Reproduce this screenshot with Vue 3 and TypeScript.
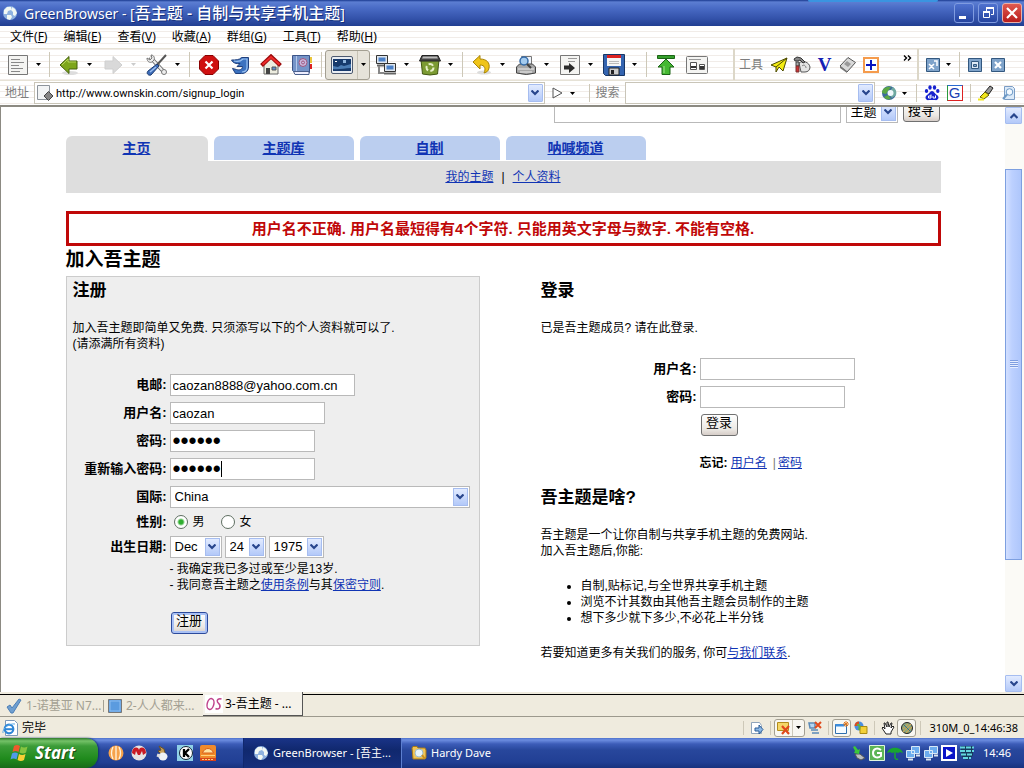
<script setup lang="ts">
import { ref } from 'vue'

interface Menu { name: string; key: string }

const menus: Menu[] = [
  { name: '文件', key: 'F' },
  { name: '编辑', key: 'E' },
  { name: '查看', key: 'V' },
  { name: '收藏', key: 'A' },
  { name: '群组', key: 'G' },
  { name: '工具', key: 'T' },
  { name: '帮助', key: 'H' },
]
const siteTabs: string[] = ['主页', '主题库', '自制', '呐喊频道']
const benefits: string[] = [
  '自制,贴标记,与全世界共享手机主题',
  '浏览不计其数由其他吾主题会员制作的主题',
  '想下多少就下多少,不必花上半分钱',
]

const address = ref('http://www.ownskin.com/signup_login')
const email = ref('caozan8888@yahoo.com.cn')
const username = ref('caozan')
const password = ref('caozan')
const repeated = ref('caozan')
const gender = ref('m')
</script>

<template>
  <div class="desktop">
    <header class="titlebar">
      <svg class="app-icon" width="16" height="16" viewBox="0 0 16 16"><circle cx="8" cy="8" r="7" fill="#8fb2e0" /><path d="M2 5l3-3 4 0 0 3-3 1-1 3-3 0zM10 2l3 2 2 4-2 3-2-1 0-3-2-2zM5 10l4 0 1 2-2 3-3-1z" fill="#f2f8f4" /></svg>
      <h1>GreenBrowser - [<span>吾主题 - 自制与共享手机主题</span>]</h1>
      <div class="pill"></div>
      <div class="winbtns">
        <button aria-label="最小化"><svg width="18" height="18" viewBox="0 0 18 18"><path d="M4 12h7v3h-7z" fill="#fff" /></svg></button>
        <button aria-label="还原"><svg width="18" height="18" viewBox="0 0 18 18" fill="none" stroke="#fff"><path d="M7.500 7V4.500h7v6H12" /><path d="M7 4h8" stroke-width="2" /><path d="M4.500 8v5.500h6V8.500" /><path d="M4 8h7" stroke-width="2" /></svg></button>
        <button class="close" aria-label="关闭"><svg width="18" height="18" viewBox="0 0 18 18"><path d="M4 4l10 10M14 4L4 14" stroke="#fff" stroke-width="2.200" /></svg></button>
      </div>
    </header>

    <div class="chrome">
      <nav class="menubar">
        <button v-for="m in menus" :key="m.key">{{ m.name }}<small>(<u>{{ m.key }}</u>)</small></button>
      </nav>

      <div class="toolrow">
        <div class="tools main-tools">
          <button class="ic first" aria-label="新建"><svg width="22" height="22" viewBox="0 0 22 22"><path d="M1.500 1.500h19v19h-19z" fill="#f4f4f2" stroke="#777" /><path d="M4 5.500h9M4 8.500h13M4 11.500h8M4 14.500h12M4 17.500h9" stroke="#888" /></svg></button>
          <button class="dd" aria-label="新建选项"><svg width="5" height="3" viewBox="0 0 5 3"><path d="M0 0h5L2.500 3z" /></svg></button>
          <i class="sep wide"></i>
          <button class="ic" aria-label="后退"><svg width="22" height="22" viewBox="0 0 22 22"><ellipse cx="12" cy="19" rx="8" ry="2" fill="#ddd" /><path d="M2 11L11 2.500V7h8v8h-8v4.500z" fill="#7da61c" stroke="#45610f" /><path d="M4 11l6-6v3h8" fill="none" stroke="#b7d45c" /></svg></button>
          <button class="dd" aria-label="后退选项"><svg width="5" height="3" viewBox="0 0 5 3"><path d="M0 0h5L2.500 3z" /></svg></button>
          <button class="ic" aria-label="前进"><svg width="22" height="22" viewBox="0 0 22 22"><path d="M20 11L11 2.500V7H3v8h8v4.500z" fill="#d9d9d9" stroke="#cfcfcf" /></svg></button>
          <button class="dd pale" aria-label="前进选项"><svg width="5" height="3" viewBox="0 0 5 3"><path d="M0 0h5L2.500 3z" /></svg></button>
          <button class="ic" aria-label="设置"><svg width="24" height="24" viewBox="0 0 24 24"><path d="M5 4l14 15" stroke="#666" stroke-width="4" /><path d="M5 4l14 15" stroke="#eee" stroke-width="2.200" /><path d="M2 5c0 4 3 5 5 4l2-2c1-2 0-5-3-5l1 3-2 2z" fill="#eee" stroke="#777" /><circle cx="19" cy="19" r="2.500" fill="#eee" stroke="#777" /><path d="M21 2l-9 10" stroke="#555" stroke-width="2" /><path d="M12 11l-9 7c-2 2 0 5 3 4l8-9z" fill="#3d6cb8" stroke="#1c3c72" /><path d="M5 19l6-5" stroke="#9dc0f0" stroke-width="1.500" /></svg></button>
          <button class="dd" aria-label="设置选项"><svg width="5" height="3" viewBox="0 0 5 3"><path d="M0 0h5L2.500 3z" /></svg></button>
          <i class="sep"></i>
          <button class="ic n" aria-label="停止"><svg width="22" height="22" viewBox="0 0 22 22"><path d="M7 1.500h8l5.500 5.500v8L15 20.500H7L1.500 15V7z" fill="#cf1010" stroke="#8a0000" /><path d="M7.500 7.500l7 7M14.500 7.500l-7 7" stroke="#fff" stroke-width="2.200" /></svg></button>
          <button class="ic n" aria-label="刷新"><svg width="20" height="20" viewBox="0 0 20 20"><path d="M1.500 5c4 0 8 0 10-2.500h7v9.500c0 4-3 6.500-7 6.500H5.500l-3-5 4 1c3 1 6 0 6-3H7l3-3C6 9 3 8 1.500 5z" fill="#3c72c0" stroke="#1f3f7c" /><path d="M4 6c4 1 7 0 9-2h4v8c0 3-2 5-5 5" fill="none" stroke="#9cc2f0" stroke-width="1.200" /></svg></button>
          <button class="ic n" aria-label="主页"><svg width="22" height="22" viewBox="0 0 22 22"><path d="M4 11v9h14v-9l-7-7z" fill="#ececdf" stroke="#666" /><path d="M1.500 11.500L11 2.500l9.500 9" fill="none" stroke="#9c0b0b" stroke-width="4" /><path d="M2.500 10.500L11 3l8.500 7.500" fill="none" stroke="#ee2a2a" stroke-width="2" /><path d="M6 14h4v6H6z" fill="#444" /><path d="M12 13h4v3h-4z" fill="#5f8fd0" stroke="#555" /></svg></button>
          <button class="ic n" aria-label="收藏"><svg width="22" height="22" viewBox="0 0 22 22"><path d="M17 3h4v6h-4z" fill="#eac63a" /><path d="M17 10h4v5h-4z" fill="#d22" /><path d="M1.500 1.500H18.500v17H3.500l-2-2z" fill="#7594c8" stroke="#3c5488" /><path d="M2.500 17.500h15.500v3H4z" fill="#eef" stroke="#4a5f8c" /><path d="M5.500 2v15" stroke="#b4c7ea" /><circle cx="12" cy="8.500" r="4" fill="#c9b8dd" stroke="#a0577f" /><circle cx="12" cy="8.500" r="1.500" fill="none" stroke="#a0577f" /></svg></button>
          <i class="sep"></i>
          <div class="pressed">
            <button class="ic" aria-label="全屏"><svg width="22" height="18" viewBox="0 0 22 18"><rect x=".5" y=".5" width="21" height="17" rx="1.500" fill="#e8edf3" stroke="#4d5a70" /><path d="M2 3h18v12H2z" fill="#173a6c" /><path d="M2 10l5 1 3-2 3 1 7-2v4c-7 0-12 2-18 1z" fill="#4b7cb4" /><path d="M12 4h3v3h-3z" fill="#8fb4dc" /><path d="M4 5h2v1H4z" fill="#fff" /></svg></button>
            <button class="dd" aria-label="全屏选项"><svg width="5" height="3" viewBox="0 0 5 3"><path d="M0 0h5L2.500 3z" /></svg></button>
          </div>
          <button class="ic" aria-label="代理"><svg width="22" height="22" viewBox="0 0 22 22"><path d="M1.500 1.500h11v8h-11z" fill="#dfe6ee" stroke="#333" /><path d="M3.500 3.500h7v4h-7z" fill="#4a80c8" /><path d="M2 11.500h8" stroke="#666" stroke-width="2" /><path d="M4 12v7h5" stroke="#888" fill="none" stroke-width="2" /><path d="M9.500 9.500h11v8h-11z" fill="#dfe6ee" stroke="#333" /><path d="M11.500 11.500h7v4h-7z" fill="#4a80c8" /><path d="M9 19.500h12" stroke="#666" stroke-width="2" /></svg></button>
          <button class="dd" aria-label="代理选项"><svg width="5" height="3" viewBox="0 0 5 3"><path d="M0 0h5L2.500 3z" /></svg></button>
          <button class="ic" aria-label="清理"><svg width="24" height="24" viewBox="0 0 24 24"><path d="M3 7h18l-1.500 14q-7.500 2-15 0z" fill="#7c9b33" stroke="#435814" /><path d="M1.500 8L4 2.500h16L22.500 8z" fill="#444" stroke="#222" /><path d="M5 3.500h14l1 2H4z" fill="#bbb" /><circle cx="12" cy="14.500" r="3.500" fill="none" stroke="#e7efc8" stroke-width="2" stroke-dasharray="5 2.300" /></svg></button>
          <button class="dd" aria-label="清理选项"><svg width="5" height="3" viewBox="0 0 5 3"><path d="M0 0h5L2.500 3z" /></svg></button>
          <i class="sep"></i>
          <button class="ic" aria-label="撤销"><svg width="22" height="22" viewBox="0 0 22 22"><ellipse cx="13" cy="18.500" rx="7" ry="2" fill="#ddd" /><path d="M2 8l7-6.500V5c7 0 10 4 9 9-.5 3-2 4-5 5 2-4 1-8-4-8v4z" fill="#f0c419" stroke="#a88405" /></svg></button>
          <button class="dd" aria-label="撤销选项"><svg width="5" height="3" viewBox="0 0 5 3"><path d="M0 0h5L2.500 3z" /></svg></button>
          <button class="ic" aria-label="打印预览"><svg width="22" height="22" viewBox="0 0 22 22"><path d="M6.500 2.500h10v9h-10z" fill="#eef3fa" stroke="#777" /><path d="M1.500 13l3-3h13l3 3v6q-9 3-19 0z" fill="#a8a8a8" stroke="#444" /><path d="M3 15h16M5 18h12" stroke="#eee" /><circle cx="9" cy="7" r="4" fill="#a4cbee" stroke="#356ba8" stroke-width="1.500" /><path d="M12 10l4 4" stroke="#444" stroke-width="2" /></svg></button>
          <button class="dd" aria-label="打印选项"><svg width="5" height="3" viewBox="0 0 5 3"><path d="M0 0h5L2.500 3z" /></svg></button>
          <button class="ic" aria-label="转到"><svg width="22" height="22" viewBox="0 0 22 22"><path d="M1.500 1.500h19v19h-19z" fill="#f4f4f2" stroke="#777" /><path d="M9 4.500h9M9 7.500h7" stroke="#999" /><path d="M5 11.500h5V9l6 5-6 5v-3.500H5z" fill="#2b2b2b" /></svg></button>
          <button class="dd" aria-label="转到选项"><svg width="5" height="3" viewBox="0 0 5 3"><path d="M0 0h5L2.500 3z" /></svg></button>
          <button class="ic" aria-label="保存"><svg width="22" height="22" viewBox="0 0 22 22"><path d="M.5.500h21v21H2.500l-2-2z" fill="#3464b0" stroke="#173666" /><path d="M4 1h14v11H4z" fill="#f5f5f5" /><path d="M4 1h14v3H4z" fill="#d22" /><path d="M6 7.500h10M6 9.500h10" stroke="#bbb" /><path d="M6 14h10v7H6z" fill="#ccc" stroke="#222" /><path d="M8 16h3v4H8z" fill="#222" /></svg></button>
          <button class="dd" aria-label="保存选项"><svg width="5" height="3" viewBox="0 0 5 3"><path d="M0 0h5L2.500 3z" /></svg></button>
          <i class="sep"></i>
          <button class="ic n" aria-label="顶部"><svg width="20" height="22" viewBox="0 0 20 22"><path d="M1.500 1.500h17v3h-17z" fill="#35a02c" stroke="#1a6415" /><path d="M10 5l8 8h-4v7.500H6V13H2z" fill="#45b832" stroke="#1a6415" /><path d="M8 12v7" stroke="#a3e58c" /></svg></button>
          <button class="ic n" aria-label="窗口"><svg width="22" height="18" viewBox="0 0 22 18"><rect x=".5" y=".5" width="21" height="17" rx="1" fill="#f4f4f2" stroke="#777" /><path d="M3 3.500h12" stroke="#999" /><path d="M4.500 6.500h6v7h-6zM13.500 8.500h5v5h-5z" fill="#fff" stroke="#555" /><path d="M5 10h5v2H5zM14 10h4v3h-4z" fill="#333" /></svg></button>
        </div>

        <div class="tools side">
          <span class="lbl">工具</span>
          <button class="ic s" aria-label="发送"><svg width="18" height="18" viewBox="0 0 18 18"><path d="M1 9L17 2l-4 13-4-4-3 5v-5z" fill="#f4ec12" stroke="#4c4a00" /><path d="M6 11L17 2" stroke="#4c4a00" /></svg></button>
          <button class="ic s" aria-label="下载"><svg width="18" height="18" viewBox="0 0 18 18"><path d="M6 7c4-3 10-1 11 4 0 3-2 5-5 5H8z" fill="#e4e4e4" stroke="#555" /><path d="M1 3l3-2 4 1 4 4-2 1-3-3-2 1H2z" fill="#888" stroke="#333" /><path d="M3 6h3v4H3z" fill="#aaa" stroke="#444" /><path d="M3 10h3v6H3z" fill="#c33" stroke="#733" /><path d="M9 10c2-2 4 0 4 2" fill="none" stroke="#777" /></svg></button>
          <button class="ic s vee" aria-label="视图">V</button>
          <button class="ic s" aria-label="擦除"><svg width="18" height="18" viewBox="0 0 18 18"><path d="M1 10L9 1.500l7.500 5L8 16z" fill="#d8d8d8" stroke="#555" /><path d="M8 5l4 3-3 3-4-3z" fill="#999" /><path d="M1 10v2l7 5v-2z" fill="#777" /></svg></button>
          <button class="ic s" aria-label="添加"><svg width="16" height="16" viewBox="0 0 16 16"><path d="M1 1h14v14H1z" fill="#fff" stroke="#f59b4c" stroke-width="2" /><path d="M8 3v10M3 8h10" stroke="#0a14c0" stroke-width="2" /></svg></button>
          <button class="more" aria-label="更多"><svg width="9" height="6" viewBox="0 0 9 6" fill="none" stroke="#000" stroke-width="1.400"><path d="M1 .5L3.500 3 1 5.500M5 .5L7.500 3 5 5.500" /></svg></button>
        </div>

        <div class="tools pages">
          <button class="ic s" aria-label="关闭全部"><svg width="14" height="14" viewBox="0 0 14 14"><path d="M.5.5h13v13H.5z" fill="#7fa3ca" stroke="#33587f" /><path d="M3 6l5 5M8 6l-5 5M8 3h3v3M11 8V3" stroke="#fff" stroke-width="1.500" fill="none" /></svg></button>
          <button class="dd" aria-label="关闭选项"><svg width="5" height="3" viewBox="0 0 5 3"><path d="M0 0h5L2.500 3z" /></svg></button>
          <i class="sep"></i>
          <button class="ic s" aria-label="还原页面"><svg width="14" height="14" viewBox="0 0 14 14"><path d="M.5.500h13v13H.5z" fill="#7fa3ca" stroke="#33587f" /><path d="M3.500 3.500h7v7h-7z" fill="#dfeaf6" stroke="#33587f" /><path d="M5.500 6.500h3v2h-3z" fill="#7fa3ca" stroke="#33587f" /></svg></button>
          <button class="ic s" aria-label="关闭页面"><svg width="14" height="14" viewBox="0 0 14 14"><path d="M.5.500h13v13H.5z" fill="#7fa3ca" stroke="#33587f" /><path d="M4 4l6 6M10 4l-6 6" stroke="#fff" stroke-width="2.200" /></svg></button>
        </div>
      </div>

      <div class="addressrow">
        <label class="lbl" for="addr">地址</label>
        <div class="combo addr">
          <svg width="18" height="18" viewBox="0 0 18 18"><path d="M1.500 1.500h12v14h-12z" fill="#f2f4f5" stroke="#8d949b" /><path d="M8 12l4.500-4.500L17 12l-4.500 4.500z" fill="#858585" stroke="#444" /></svg>
          <input id="addr" v-model="address" type="text">
          <button class="arrow" aria-label="地址列表"><svg width="8" height="6" viewBox="0 0 8 6"><path d="M.5.500L4 4 7.500.5" fill="none" stroke="#27458c" stroke-width="2.200" /></svg></button>
        </div>
        <button class="go" aria-label="转到"><svg width="11" height="12" viewBox="0 0 11 12"><path d="M1 1l9 5-9 5z" fill="#fdfdfd" stroke="#555" /></svg></button>
        <button class="dd" aria-label="转到列表"><svg width="5" height="3" viewBox="0 0 5 3"><path d="M0 0h5L2.500 3z" /></svg></button>
        <i class="sep search-sep"></i>
        <label class="lbl" for="web">搜索</label>
        <div class="combo find">
          <input id="web" type="text">
          <button class="arrow" aria-label="搜索列表"><svg width="8" height="6" viewBox="0 0 8 6"><path d="M.5.500L4 4 7.500.5" fill="none" stroke="#27458c" stroke-width="2.200" /></svg></button>
        </div>
        <div class="engines">
          <button class="ic s" aria-label="搜索引擎"><svg width="16" height="16" viewBox="0 0 16 16"><circle cx="8" cy="8" r="7" fill="#3d6a9c" /><path d="M1 8c0-5 5-7 9-6L7 6 5 9zM3 12l4-2 3 4c-3 1-6 0-7-2z" fill="#5aa843" /><path d="M7 8l5-6c3 2 4 5 3 8l-4 3z" fill="#6fa9a0" /><circle cx="9.500" cy="8" r="3" fill="#f0f8fb" /></svg></button>
          <button class="dd" aria-label="引擎列表"><svg width="5" height="3" viewBox="0 0 5 3"><path d="M0 0h5L2.500 3z" /></svg></button>
          <i class="sep"></i>
          <button class="ic s" aria-label="百度"><svg width="16" height="16" viewBox="0 0 16 16" fill="#1722cf"><ellipse cx="2.500" cy="6" rx="1.700" ry="2" /><ellipse cx="6" cy="2.500" rx="1.700" ry="2.300" /><ellipse cx="10.500" cy="2.500" rx="1.700" ry="2.300" /><ellipse cx="13.800" cy="6" rx="1.700" ry="2" /><path d="M8 6c2 0 3 3 5 4 3 2 1 6-2 5H5c-3 1-5-3-2-5 2-1 3-4 5-4z" /><path d="M7 9.500v3.500H4.500v-2H7M9 11v2h2.500v-2.500" fill="none" stroke="#fff" /></svg></button>
          <button class="ic s gee" aria-label="谷歌"><span>G</span></button>
          <i class="sep"></i>
          <button class="ic s" aria-label="高亮"><svg width="16" height="16" viewBox="0 0 16 16"><path d="M7 7l5-6 3 2-4 6z" fill="#999" stroke="#222" /><path d="M2 12l5-5 4 3-5 4z" fill="#f2e61b" stroke="#655f00" /><path d="M0 14.500h6" stroke="#f2e61b" stroke-width="2" /></svg></button>
          <button class="ic s" aria-label="页内查找"><svg width="16" height="16" viewBox="0 0 16 16"><path d="M3.500 1.500h8l2 2v11h-10z" fill="#dceaf8" stroke="#7a9cc4" /><circle cx="8.500" cy="7" r="3.300" fill="#f2f9ff" stroke="#6b98c6" /><path d="M6 9.500L2 14" stroke="#6b98c6" stroke-width="2" /></svg></button>
        </div>
      </div>
    </div>

    <main class="viewport">
      <div class="page">
        <div class="content">
          <form class="sitesearch" @submit.prevent>
            <input type="text" aria-label="搜寻内容">
            <span class="pick w-type">
              <select aria-label="搜寻类别"><option>主题</option></select>
              <i><svg width="8" height="6" viewBox="0 0 8 6"><path d="M.5.500L4 4 7.500.5" fill="none" stroke="#27458c" stroke-width="2.200" /></svg></i>
            </span>
            <button class="xp">搜寻</button>
          </form>

          <nav class="sitetabs">
            <a v-for="(t, i) in siteTabs" :key="t" href="#" :class="{ on: i === 0 }">{{ t }}</a>
          </nav>
          <nav class="subnav"><a href="#">我的主题</a><span>|</span><a href="#">个人资料</a></nav>

          <p class="alert">用户名不正确. 用户名最短得有4个字符. 只能用英文字母与数字. 不能有空格.</p>
          <h2 class="join">加入吾主题</h2>

          <div class="columns">
            <section class="register">
              <h3>注册</h3>
              <p>加入吾主题即简单又免费. 只须添写以下的个人资料就可以了.<br>(请添满所有资料)</p>
              <form class="fields" @submit.prevent>
                <label for="email">电邮:</label>
                <input id="email" v-model="email" class="w-email" type="text">
                <label for="user">用户名:</label>
                <input id="user" v-model="username" class="w-user" type="text">
                <label for="pass">密码:</label>
                <input id="pass" v-model="password" class="w-pass" type="password">
                <label for="again">重新输入密码:</label>
                <div class="w-pass caret"><input id="again" v-model="repeated" class="w-pass" type="password"><i></i></div>
                <label for="country">国际:</label>
                <span class="pick w-country">
                  <select id="country"><option>China</option></select>
                  <i><svg width="8" height="6" viewBox="0 0 8 6"><path d="M.5.500L4 4 7.500.5" fill="none" stroke="#27458c" stroke-width="2.200" /></svg></i>
                </span>
                <span class="name">性别:</span>
                <div class="radios">
                  <label><input v-model="gender" type="radio" name="gender" value="m">男</label>
                  <label><input v-model="gender" type="radio" name="gender" value="f">女</label>
                </div>
                <label for="month">出生日期:</label>
                <div class="dates">
                  <span class="pick w-month">
                    <select id="month"><option>Dec</option></select>
                    <i><svg width="8" height="6" viewBox="0 0 8 6"><path d="M.5.500L4 4 7.500.5" fill="none" stroke="#27458c" stroke-width="2.200" /></svg></i>
                  </span>
                  <span class="pick w-day">
                    <select aria-label="日"><option>24</option></select>
                    <i><svg width="8" height="6" viewBox="0 0 8 6"><path d="M.5.500L4 4 7.500.5" fill="none" stroke="#27458c" stroke-width="2.200" /></svg></i>
                  </span>
                  <span class="pick w-year">
                    <select aria-label="年"><option>1975</option></select>
                    <i><svg width="8" height="6" viewBox="0 0 8 6"><path d="M.5.500L4 4 7.500.5" fill="none" stroke="#27458c" stroke-width="2.200" /></svg></i>
                  </span>
                </div>
                <div class="terms">
                  - 我确定我已多过或至少是13岁.<br>
                  - 我同意吾主题之<a href="#">使用条例</a>与其<a href="#">保密守则</a>.
                </div>
                <button class="xp primary">注册</button>
              </form>
            </section>

            <section class="login">
              <h3>登录</h3>
              <p>已是吾主题成员? 请在此登录.</p>
              <form class="fields" @submit.prevent>
                <label for="luser">用户名:</label>
                <input id="luser" class="w-user" type="text">
                <label for="lpass">密码:</label>
                <input id="lpass" class="w-pass" type="password">
                <button class="xp">登录</button>
                <div class="forgot"><b>忘记:</b> <a href="#">用户名</a><span>|</span><a href="#">密码</a></div>
              </form>
              <h3 class="what">吾主题是啥?</h3>
              <p>吾主题是一个让你自制与共享手机主题的免费网站.<br>加入吾主题后,你能:</p>
              <ul><li v-for="b in benefits" :key="b">{{ b }}</li></ul>
              <p>若要知道更多有关我们的服务, 你可<a href="#">与我们联系</a>.</p>
            </section>
          </div>
        </div>
      </div>
      <div class="scrollbar">
        <button class="arrow" aria-label="向上"><svg width="8" height="6" viewBox="0 0 8 6"><path d="M.5 5L4 1.500 7.500 5" fill="none" stroke="#27458c" stroke-width="2.200" /></svg></button>
        <div class="track"><div class="thumb"><i></i></div></div>
        <button class="arrow" aria-label="向下"><svg width="8" height="6" viewBox="0 0 8 6"><path d="M.5.500L4 4 7.500.5" fill="none" stroke="#27458c" stroke-width="2.200" /></svg></button>
      </div>
    </main>

    <nav class="pagetabs">
      <button class="t1"><svg width="16" height="16" viewBox="0 0 16 16"><path d="M1 9l3-2 2 3 7-9 2 1-8 13H5z" fill="#6f9fd0" stroke="#4d7fb6" /></svg>1-诺基亚 N7...</button>
      <i class="tabsep"></i>
      <button class="t2"><svg width="14" height="14" viewBox="0 0 14 14"><path d="M.5.500h13v13H.5z" fill="#5b9bdf" stroke="#777" /><path d="M2 2h10v10H2z" fill="none" stroke="#8dbdf0" /></svg>2-人人都来...</button>
      <button class="t3"><svg width="18" height="18" viewBox="0 0 18 18"><path d="M0 0h18v18H0z" fill="#fff" /><g fill="none" stroke="#c0448c" stroke-width="1.500"><ellipse cx="5.500" cy="9" rx="3.300" ry="5.500" transform="rotate(15 5.500 9)" /><path d="M16.500 4c-3-1-5 1-4 3s4 3 2 6c-1 1-3 1-4 .5" /></g></svg>3-吾主题 - ...</button>
      <span class="rest"></span>
    </nav>

    <footer class="status">
      <svg width="16" height="16" viewBox="0 0 16 16"><path d="M3.500.500h9l3 3v12h-12z" fill="#fff" stroke="#7c98b8" /><circle cx="7" cy="9" r="4.300" fill="none" stroke="#2f86d6" stroke-width="2.200" /><path d="M3 9.200h8" stroke="#2f86d6" stroke-width="2" /><path d="M1 13C0 9 7 3 13 4" fill="none" stroke="#5aaae8" /></svg>
      <span class="done">完毕</span>
      <div class="statusicons">
        <i class="sep"></i>
        <button class="ic e" aria-label="编辑页面"><svg width="14" height="14" viewBox="0 0 14 14"><path d="M1.500 1.500h8l2 3v8h-10z" fill="#fff" stroke="#8fa4bb" /><path d="M5 7h4V4l4 4.500L9 13v-3H5z" fill="#8db9e6" stroke="#2b5c96" /></svg></button>
        <i class="sep"></i>
        <span class="box two">
          <button class="ic b" aria-label="拦截"><svg width="14" height="14" viewBox="0 0 14 14"><path d="M.5 1.500h11v8H.5z" fill="#f5d768" stroke="#b28d1c" /><path d="M5 5l7 8M12 5l-7 8" stroke="#e04a1c" stroke-width="2.200" /></svg></button>
          <button class="dd" aria-label="拦截选项"><svg width="5" height="3" viewBox="0 0 5 3"><path d="M0 0h5L2.500 3z" /></svg></button>
        </span>
        <button class="ic b" aria-label="断开"><svg width="14" height="14" viewBox="0 0 14 14"><path d="M1 2h6v5H2zM3 9h7M4 12h7" fill="#b6d6f2" stroke="#5b8ab8" stroke-width="1.500" /><path d="M7 1l6 6M13 1L7 7" stroke="#e04a1c" stroke-width="2" /></svg></button>
        <i class="sep"></i>
        <span class="box"><button class="ic b" aria-label="新窗口"><svg width="14" height="14" viewBox="0 0 14 14"><path d="M.5 3.500h11v9H.5z" fill="#f6fbff" stroke="#2f6fae" /><path d="M.5 3h9v2.500h-9z" fill="#3c8cdc" /><path d="M11 0v6M8 3h6M9 1l4 4M13 1L9 5" stroke="#e07820" /></svg></button></span>
        <button class="ic b" aria-label="颜色"><svg width="14" height="14" viewBox="0 0 14 14"><circle cx="5" cy="5" r="4.500" fill="#4a8ee0" /><path d="M5 5V.500A4.500 4.500 0 0 0 .5 5z" fill="#e04a1c" /><path d="M6 5.500h7v7H6z" fill="#f2d038" stroke="#a98b12" /><path d="M3 4c3-1 3 2 2 5" stroke="#56b04b" stroke-width="2" fill="none" /></svg></button>
        <i class="sep"></i>
        <button class="ic b" aria-label="手势"><svg width="14" height="14" viewBox="0 0 14 14"><path d="M5 13l-4-6 1-1 2 2-1-6h1l2 4V1h1l1 5 2-4h1l-1 5 2-2 1 1-3 5v2z" fill="#fff" stroke="#222" /></svg></button>
        <span class="box"><button class="ic b" aria-label="滤镜"><svg width="14" height="14" viewBox="0 0 14 14"><circle cx="7" cy="7" r="5.500" fill="#8fa77b" stroke="#222" /><path d="M3 8l5-5M3 11l8-8M6 12l6-6" stroke="#d6a24c" /><path d="M4 4l7 7" stroke="#3a7388" /></svg></button></span>
        <i class="sep"></i>
        <span class="mem">310M_0_14:46:38</span>
      </div>
    </footer>

    <div class="taskbar">
      <button class="start">
        <svg width="20" height="18" viewBox="0 0 20 18"><path d="M4 2q3-2 6 0L8.500 8q-3-2-6 0z" fill="#ee5a2c" /><path d="M11 2.500q3 2 6.500 0L16 8.500q-3 2-6.500 0z" fill="#86c440" /><path d="M2 9.500q3-2 6 0L6.500 15.500q-3-2-6 0z" fill="#4f9be8" /><path d="M9 10q3 2 6.500 0L14 16q-3 2-6.500 0z" fill="#f9cf35" /></svg>Start
      </button>
      <div class="quick">
        <button aria-label="网球"><svg width="16" height="16" viewBox="0 0 16 16"><circle cx="8" cy="8" r="7.500" fill="#f6a24b" /><path d="M5 2q-3 6 0 12M8 1v14M11 2q3 6 0 12" fill="none" stroke="#fff3dd" stroke-width="1.300" /></svg></button>
        <button aria-label="播放器"><svg width="16" height="16" viewBox="0 0 16 16"><circle cx="8" cy="8" r="7.500" fill="#e6e3e3" /><path d="M1 8c0-6 6-7 7-3 1-4 7-3 7 3l-3 2-1-4-2 4H7L5 6 4 10z" fill="#c81a24" /></svg></button>
        <button aria-label="工具"><svg width="16" height="16" viewBox="0 0 16 16"><path d="M5 1l5 3 1 4-4 1-3-3 3-1z" fill="#c9a25c" stroke="#6b5327" /><ellipse cx="9" cy="11.500" rx="4.500" ry="4" fill="#eef2f6" /><path d="M3 10l3 1" stroke="#ddd" stroke-width="3" /></svg></button>
        <button aria-label="酷狗"><svg width="16" height="16" viewBox="0 0 16 16"><path d="M0 0h16v16H0z" fill="#8fd0e6" /><circle cx="9" cy="8" r="6.500" fill="#fff" stroke="#123" /><path d="M7 4v8M12 4L8 8l4 4" stroke="#000" stroke-width="2.300" fill="none" /></svg></button>
        <button aria-label="桌面"><svg width="16" height="16" viewBox="0 0 16 16"><rect width="16" height="14" rx="2" fill="#f08a2a" /><path d="M2.500 8c2-6 9-6 11 0z" fill="#ffe2a0" stroke="#d8601b" /><path d="M1 10.500h14" stroke="#ffd27a" /><path d="M0 13h16v3H0z" fill="#d8431b" /><path d="M2 14.500h12" stroke="#ffd27a" stroke-dasharray="2 1" /></svg></button>
      </div>
      <button class="task active">
        <svg width="16" height="16" viewBox="0 0 16 16"><circle cx="8" cy="8" r="7" fill="#8fb2e0" /><path d="M2 5l3-3 4 0 0 3-3 1-1 3-3 0zM10 2l3 2 2 4-2 3-2-1 0-3-2-2zM5 10l4 0 1 2-2 3-3-1z" fill="#f2f8f4" /></svg>GreenBrowser - [吾主...
      </button>
      <button class="task">
        <svg width="16" height="16" viewBox="0 0 16 16"><path d="M1 3l1-1.500h4l1 1.500h7l1 2v8l-2 1H2z" fill="#f0c456" stroke="#a87b18" /><circle cx="8" cy="8" r="4" fill="#e6f4fa" stroke="#9cb9c9" /><path d="M11 10l3 4" stroke="#c98f1e" stroke-width="2" /></svg>Hardy Dave
      </button>
      <div class="tray">
        <svg width="16" height="16" viewBox="0 0 16 16"><path d="M4 9l5 0 5 4-4 2-4-2z" fill="#b9bfc2" stroke="#555" /><path d="M2 2l2-1 3 4 2-1-1 5-5-1 1-2z" fill="#3cc73a" /></svg>
        <svg width="16" height="16" viewBox="0 0 16 16"><path d="M.5.500h15v15H.5z" fill="#5cb555" stroke="#e2f5df" /><path d="M12 5C8 2 4 4 4 8s4 6 8 3V8H8" fill="none" stroke="#fff" stroke-width="2" /></svg>
        <svg width="16" height="16" viewBox="0 0 16 16"><path d="M0 8c2-7 14-7 16 0l-3-1-2 1-3-1-3 1-2-1z" fill="#18a52f" /><path d="M8 7v6q1 2 3 1" fill="none" stroke="#18a52f" stroke-width="1.500" /></svg>
        <svg width="16" height="16" viewBox="0 0 16 16"><path d="M6.500 1.500h8v7h-8zM1.500 5.500h8v7h-8z" fill="#6cacee" stroke="#d8e8f7" /><path d="M3 14.500h5M11 10.500h4" stroke="#dce7f2" stroke-width="2" /></svg>
        <svg width="16" height="16" viewBox="0 0 16 16"><path d="M6.500 1.500h8v7h-8zM1.500 5.500h8v7h-8z" fill="#6cacee" stroke="#d8e8f7" /><path d="M3 14.500h5M11 10.500h4" stroke="#dce7f2" stroke-width="2" /></svg>
        <svg width="16" height="16" viewBox="0 0 16 16"><path d="M1 1h14v14H1z" fill="#0a14c8" stroke="#fff" stroke-width="2" /><path d="M5 4l7 4-7 4z" fill="#fff" /></svg>
        <svg width="16" height="16" viewBox="0 0 16 16"><path d="M2 1h12v9q-2 4-6 5-4-1-6-5z" fill="#163a5c" /><path d="M1 2.500h14M1 6h14M2 9.500h12M4 13h8" stroke="#63d6e0" stroke-width="2" stroke-dasharray="5 1" /></svg>
        <time>14:46</time>
      </div>
    </div>
  </div>
</template>

<style>
html, body { height: 100%; background: #fff; }
body { margin: 0; }
</style>

<style scoped>
.desktop {
  --ui: "Noto Sans", "Noto Sans CJK SC", sans-serif;
  --edge: #b9b9b9;
  display: flex;
  flex-direction: column;
  height: 100vh;
  overflow: hidden;
  font: 12px/16px "Liberation Sans", "Noto Sans CJK SC", sans-serif;
  color: #000;
}
button { margin: 0; padding: 0; border: 0; background: none; font: inherit; color: inherit; white-space: nowrap; }
input, select { box-sizing: border-box; margin: 0; font: inherit; color: inherit; outline: 0; }
svg { display: block; flex: none; }
a { color: #1034b4; }
.sep { width: 8px; align-self: stretch; flex: none; display: flex; justify-content: center; }
.sep::before { content: ""; width: 1px; margin: 3px 0; background: #cdc8b8; }

/* title bar */
.titlebar {
  position: relative;
  display: flex;
  align-items: center;
  flex: none;
  height: 26px;
  padding: 0 2px;
  background: linear-gradient(#1a3a90 0, #5c7ed2 2px, #4a6cc6 30%, #3453ab 70%, #213f92);
  color: #fff;
}
h1 { flex: 1; margin: 0 0 0 6px; font: 14px/20px var(--ui); text-shadow: 1px 1px #16307c; }
h1 span { font-size: 16px; font-weight: 500; }
.pill { position: absolute; top: 0; right: 86px; width: 130px; height: 2px; border-radius: 0 0 4px 4px; background: #3a94e0; }
.winbtns { display: flex; gap: 4px; }
.winbtns button { width: 20px; height: 20px; box-sizing: border-box; border: 1px solid #7f9be0; border-radius: 3px; background: linear-gradient(#4f72cf, #2544a0); }
.winbtns .close { border-color: #eab0a8; background: linear-gradient(#e05a50, #b81c1c); }

/* browser bars */
.chrome {
  flex: none;
  background: repeating-linear-gradient(#fff 0, #fff 5px, #f1ece8 5px, #f1ece8 6px);
  border-bottom: 2px solid #8c8a82;
}
.menubar { display: flex; gap: 16px; height: 22px; padding-left: 10px; align-items: center; font-family: var(--ui); }
.menubar small { font-size: 12px; }
.toolrow { display: flex; height: 32px; border-top: 1px solid #e6e2d6; box-sizing: border-box; }
.tools { display: flex; align-items: center; }
.main-tools { flex: 1; }
.side { width: 184px; border-left: 2px solid #dcd7c8; box-sizing: border-box; padding-left: 4px; }
.pages { width: 107px; border-left: 2px solid #dcd7c8; box-sizing: border-box; padding-left: 2px; }
.ic { width: 32px; height: 28px; flex: none; display: flex; align-items: center; justify-content: center; }
.ic.n { width: 31px; }
.ic.s { width: 23px; }
.ic.first { margin-left: 2px; }
.dd { width: 12px; height: 28px; flex: none; display: flex; align-items: center; justify-content: center; padding-right: 3px; box-sizing: border-box; }
.pale { opacity: .2; }
.sep.wide { width: 7px; }
.pressed { display: flex; border: 1px solid #a39f92; border-radius: 3px; background: #e6e3da; box-sizing: border-box; width: 45px; }
.pressed .ic { border-right: 1px solid #c6c2b5; box-sizing: border-box; }
.pressed .dd { padding-right: 1px; }
.lbl { flex: none; color: #7d7d7d; font: 12px/16px var(--ui); }
.side .lbl { margin-right: 4px; }
.side .vee { font: bold 19px/24px "Liberation Serif", serif; color: #1420b4; }
.more { margin: 0 5px 14px auto; }
.pages .dd { margin-right: -1px; }

.addressrow { display: flex; align-items: center; height: 24px; padding: 0 4px 0 5px; border-top: 1px solid #e6e2d6; }
.combo { display: flex; align-items: center; height: 22px; box-sizing: border-box; border: 1px solid #c9c5b8; background: #fff; padding: 1px; }
.combo input { flex: 1; min-width: 0; height: 18px; padding: 0 2px; border: 0; background: none; font: 11px/16px Roboto, "Noto Sans CJK SC", sans-serif; }
.addr { flex: 514; margin: 0 7px 0 5px; }
.find { flex: 250; margin: 0 2px 0 5px; }
.go { margin-right: 5px; }
.arrow {
  display: flex; align-items: center; justify-content: center;
  width: 15px; height: 18px; flex: none; box-sizing: border-box;
  border: 1px solid #a6bdf0; border-radius: 1px;
  background: linear-gradient(#e2ebff, #b3c9f9);
}
.search-sep { margin: 0 2px 0 6px; }
.engines { display: flex; align-items: center; flex: none; height: 24px; }
.gee span { width: 14px; height: 14px; border: 1px solid; border-color: #2a6ad0 #d22 #d22 #2a9a3a; background: #fff; font: 15px/14px "Liberation Sans", sans-serif; color: #1a3fb4; }

/* page area */
.viewport { display: flex; flex: 1; min-height: 0; border-left: 1px solid #8c8a82; background: #fff; }
.page { flex: 1; min-width: 0; overflow: hidden; }
.content { max-width: 875px; margin: 0 auto; }
.sitesearch { display: flex; align-items: flex-end; justify-content: flex-end; height: 16px; overflow: hidden; gap: 5px; padding-right: 1px; font-size: 12px; }
.sitesearch input { width: 287px; height: 22px; border: 1px solid var(--edge); }
.sitesearch select { font-size: 12px; }
.sitesearch .xp { margin-bottom: 1px; padding-bottom: 0; }

.sitetabs { display: flex; gap: 6px; margin-top: 13px; }
.sitetabs a { width: 140px; height: 24px; margin-bottom: 1px; border-radius: 6px 6px 0 0; background: #bbceef; font: bold 14px/24px "Liberation Sans", "Noto Sans CJK SC", sans-serif; text-align: center; }
.sitetabs .on { width: 142px; margin-bottom: 0; padding-bottom: 1px; background: #dedede; }
.subnav { height: 32px; background: #dedede; text-align: center; line-height: 32px; }
.subnav span { margin: 0 8px; }
.alert { margin: 18px 0 0; border: 3px solid #c00808; color: #c00808; font: bold 15px/29px "Liberation Sans", "Noto Sans CJK SC", sans-serif; text-align: center; }
h2, h3 { margin: 0; font: bold 17px/24px "Liberation Sans", "Noto Sans CJK SC", sans-serif; }
.join { margin: 2px 0 4px; font-size: 19px; }
.columns { display: grid; grid-template-columns: 414px 1fr; column-gap: 61px; align-items: start; }
.columns p { margin: 17px 0 0; }
.register { padding: 2px 6px 11px; background: #eee; border: 1px solid #ccc; box-sizing: border-box; }
.login { padding-top: 3px; }

.fields { display: grid; grid-template-columns: 94px 1fr; column-gap: 3px; row-gap: 6px; margin-top: 22px; align-items: center; justify-items: start; }
.login .fields { grid-template-columns: 156px 1fr; margin-top: 22px; }
.fields > label, .name { justify-self: end; white-space: nowrap; font-weight: bold; font-size: 13px; }
.fields input[type="text"], .fields input[type="password"] { height: 22px; padding: 0 2px; border: 1px solid var(--edge); background: #fff; font-size: 13px; }
.fields input[type="password"] { font-family: "Liberation Sans", sans-serif; font-size: 23px; line-height: 20px; }
.w-email { width: 185px; }
.w-user { width: 155px; }
.w-pass { width: 145px; }
.caret { position: relative; height: 22px; }
.caret i { position: absolute; left: 51px; top: 3px; width: 1px; height: 16px; background: #000; }
.pick { position: relative; display: block; }
.pick select { width: 100%; height: 22px; padding: 0 4px; border: 1px solid var(--edge); border-radius: 0; background: #fff; appearance: none; font-size: 13px; }
.pick i {
  position: absolute; right: 2px; top: 2px; width: 15px; height: 18px; box-sizing: border-box;
  display: flex; align-items: center; justify-content: center; pointer-events: none;
  border: 1px solid #a6bdf0; background: linear-gradient(#e2ebff, #b3c9f9);
}
.w-type { width: 52px; }
.w-country { width: 300px; }
.w-month { width: 52px; }
.w-day { width: 41px; }
.w-year { width: 55px; }
.radios { display: flex; gap: 16px; height: 16px; padding-left: 4px; }
.radios label { display: flex; align-items: center; gap: 5px; }
.radios input { appearance: none; width: 14px; height: 14px; border: 1px solid #5f6f62; border-radius: 50%; background: #fff; }
.radios input:checked { background: radial-gradient(#2fae2f 0, #2fae2f 2px, #fff 4px); }
.dates { display: flex; gap: 3px; }
.terms { grid-column: 2; margin-top: -3px; white-space: nowrap; }
.xp {
  width: 37px; height: 22px; box-sizing: border-box;
  border: 1px solid #707070; border-radius: 3px;
  background: linear-gradient(#fff, #ece9e4 70%, #d6cdc8);
  font-size: 13px; line-height: 16px; padding-bottom: 4px;
}
.fields .xp { grid-column: 2; margin-left: 1px; }
.fields .primary { margin-top: 13px; border-color: #2c4a9c; box-shadow: inset 0 0 0 2px #a9c1f5; }
.forgot { grid-column: 2; margin-top: 13px; }
.forgot span { margin: 0 2px 0 6px; color: #777; }
.what { margin-top: 15px; }
ul { margin: 19px 0; padding-left: 40px; }

.scrollbar { display: flex; flex-direction: column; width: 19px; padding-right: 1px; box-sizing: border-box; background: #fbfaf6; }
.scrollbar .arrow { width: 17px; height: 17px; }
.track { display: grid; flex: 1; grid-template-rows: 45fr 390fr 115fr; }
.thumb { grid-row: 2; display: flex; align-items: center; justify-content: center; width: 17px; box-sizing: border-box; border: 1px solid #7d9fe0; background: linear-gradient(90deg, #d3e0ff, #bcd0ff 40%, #aec6fb); }
.thumb i { width: 8px; height: 8px; background: repeating-linear-gradient(#7f9ee0 0, #7f9ee0 1px, #e6eeff 1px, #e6eeff 2px); }

/* bottom bars */
.pagetabs { display: flex; flex: none; height: 25px; background: #efebde; box-sizing: border-box; border-bottom: 1px solid #9c998d; color: #a3a093; font-family: var(--ui); }
.pagetabs button { display: flex; align-items: center; gap: 4px; margin-top: 2px; border-top: 1px solid #000; }
.t1 { width: 97px; padding-left: 6px; box-sizing: content-box; }
.tabsep { width: 4px; margin-top: 2px; border-top: 1px solid #000; background: linear-gradient(90deg, #a3a093 50%, transparent 50%) 0 5px / 2px 12px no-repeat; }
.pagetabs .t2 { width: 96px; padding-left: 1px; }
.pagetabs .t3 { width: 100px; margin-top: 0; padding: 1px 0 0 2px; gap: 2px; border: 0; border-right: 1px solid #555; border-bottom: 1px solid #555; background: #f5f2ea; color: #000; box-sizing: border-box; }
.rest { flex: 1; margin-top: 2px; border-top: 1px solid #000; }
.status { display: flex; align-items: center; flex: none; height: 21px; padding: 0 6px 0 2px; background: #efebde; font-family: var(--ui); }
.done { margin-left: 4px; }
.statusicons { display: flex; align-items: center; height: 20px; margin-left: auto; }
.status .ic { height: 18px; width: 19px; }
.status .dd { height: 16px; padding: 0; border-left: 1px solid #ccc8ba; }
.box { display: flex; align-items: center; height: 18px; box-sizing: border-box; border: 1px solid #a39f92; border-radius: 3px; background: #f8f7f2; }
.box .ic { width: 17px; }
.mem { width: 94px; text-align: right; font-size: 11px; }

.taskbar { display: flex; flex: none; height: 30px; color: #fff; font: 11px/16px var(--ui); background: linear-gradient(#4e72cc 0, #6c8de0 2px, #3c5cb8 6px, #28479c 40%, #213f94 80%, #18327e); }
.start { display: flex; align-items: center; gap: 5px; width: 98px; padding-left: 10px; box-sizing: border-box; border-radius: 0 12px 12px 0; background: linear-gradient(#2f7a2c 0, #74c268 3px, #3c9c38 8px, #1f8a1c 70%, #176a18); box-shadow: 1px 0 2px #12306c; font: italic bold 17px/24px "Open Sans", sans-serif; text-shadow: 1px 1px #1b4d18; }
.quick { display: flex; align-items: center; gap: 7px; width: 145px; padding-left: 10px; box-sizing: border-box; }
.task { display: flex; align-items: center; gap: 4px; width: 160px; padding-left: 9px; box-sizing: border-box; border-left: 1px solid #5d7fd0; }
.task.active { background: linear-gradient(#1a3488, #10286e 40%, #162f7c); border-color: #10286e; width: 158px; }
.tray { display: flex; align-items: center; gap: 2px; margin-left: auto; padding: 0 13px 0 10px; }
.tray time { margin-left: 6px; }
</style>
